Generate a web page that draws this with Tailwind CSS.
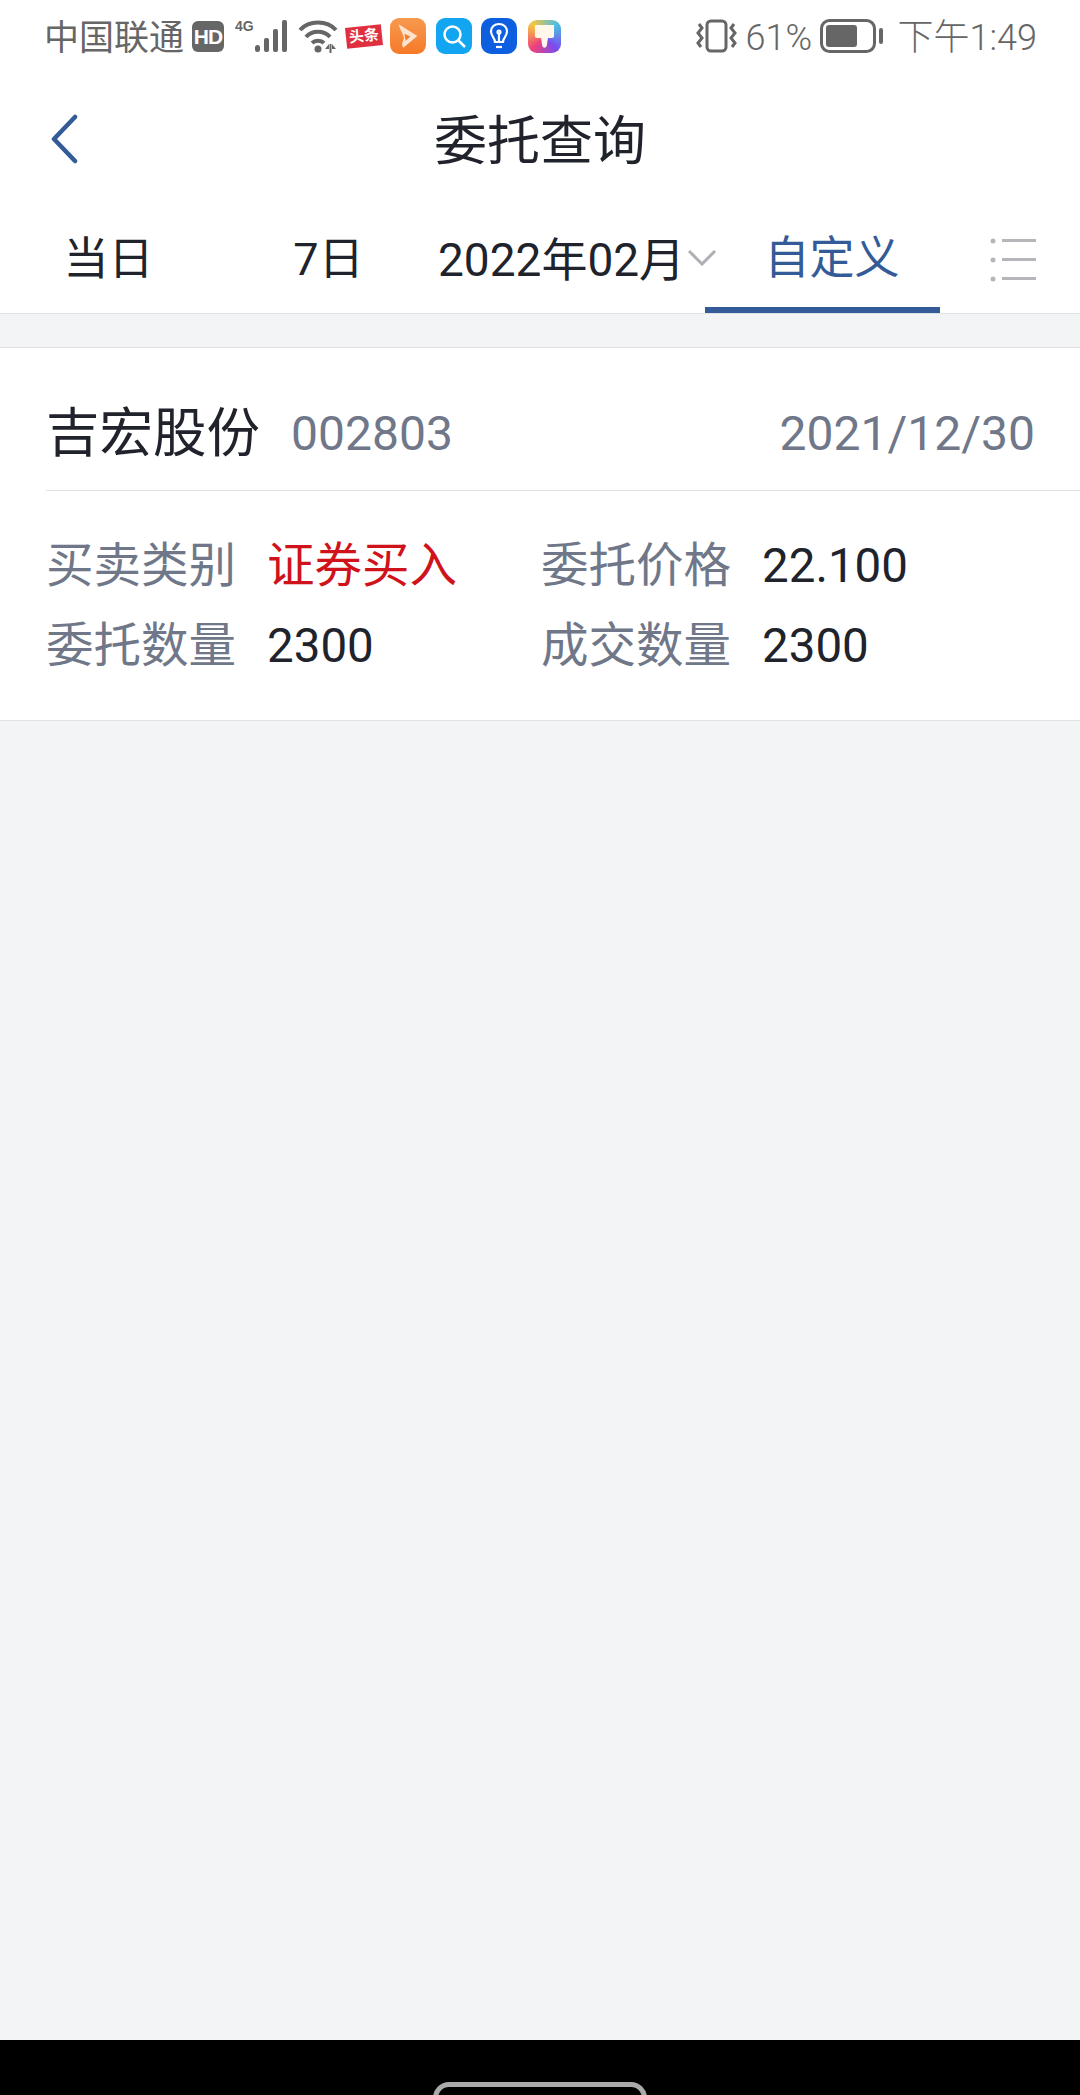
<!DOCTYPE html>
<html lang="zh-CN">
<head>
  <meta charset="UTF-8" />
  <meta name="viewport" content="width=device-width, initial-scale=1.0" />
  <title>委托查询</title>
  <script src="https://cdn.jsdelivr.net/npm/@tailwindcss/browser@4"></script>
</head>
<body class="bg-[#f3f4f6] font-['Roboto','Noto_Sans_CJK_SC',sans-serif]">
  <div class="w-[1080px] h-[2095px] flex flex-col overflow-hidden">

    <!-- status bar -->
    <div class="h-[72px] shrink-0 bg-white flex items-center pl-[44px] pr-[43px] text-[#666] text-[36px] leading-none">
      <span class="text-[35px] w-[148px] mt-[4px] whitespace-nowrap">中国联通</span>
      <div class="w-[32px] h-[31px] rounded-[6px] bg-[#666] text-white text-[21px] font-bold flex items-center justify-center font-['Liberation_Sans',sans-serif] tracking-[-1px]">HD</div>
      <div class="relative w-[53px] h-[34px] ml-[11px]">
        <span class="absolute left-0 top-0 text-[14px] font-bold leading-[14px] font-['Liberation_Sans',sans-serif]">4G</span>
        <svg class="absolute left-0 top-0" width="53" height="34" viewBox="0 0 53 34" fill="#666">
          <rect x="20" y="26" width="5" height="7" rx="2.500"/>
          <rect x="29" y="19" width="5" height="14" rx="2"/>
          <rect x="38" y="10" width="5" height="23" rx="2"/>
          <rect x="47" y="1" width="5" height="32" rx="2"/>
        </svg>
      </div>
      <svg class="ml-[10px]" width="41" height="34" viewBox="0 0 41 34" fill="none" stroke="#666" stroke-width="4">
        <path d="M2 11 C11 1 29 1 38 11"/>
        <path d="M8 18 C14 11 26 11 32 18"/>
        <path d="M14 24 C17 21 23 21 26 24"/>
        <circle cx="20" cy="30" r="3.500" fill="#666" stroke="none"/>
        <path d="M31 25 L27 30 H31 Z M34 25 L38 30 H34 Z" fill="#666" stroke="none"/>
        <path d="M32.500 25 V34" stroke-width="2"/>
      </svg>
      <div class="ml-[7px] w-[36px] h-[21px] -rotate-6 bg-[#e03040] text-white text-[15px] font-bold flex items-center justify-center whitespace-nowrap">头条</div>
      <div class="ml-[8px] w-[36px] h-[36px] rounded-[9px] bg-gradient-to-b from-[#f7994f] to-[#f57a25] flex items-center justify-center">
        <svg width="24" height="28" viewBox="0 0 20 24" fill="none"><path d="M2 2 L18 12 L6 22 C3 18 8 15 6 12 C5 9 3 6 2 2 Z" fill="#fde3d0"/><path d="M7 10 L12 12.500 L8 16 Z" fill="#f57a25"/></svg>
      </div>
      <div class="ml-[10px] w-[36px] h-[36px] rounded-[9px] bg-[#12a6f2] flex items-center justify-center">
        <svg width="26" height="26" viewBox="0 0 26 26" fill="none" stroke="#fff" stroke-width="2.500"><circle cx="11.500" cy="11.500" r="8"/><path d="M17.500 17.500 L24 24"/></svg>
      </div>
      <div class="ml-[9px] w-[36px] h-[36px] rounded-[10px] bg-[#0d5fe0] flex items-center justify-center">
        <svg width="20" height="28" viewBox="0 0 20 28" fill="none" stroke="#fff" stroke-width="2.200"><path d="M6 20 C6 16 2 14 2 9.500 C2 5 5.500 2 10 2 C14.500 2 18 5 18 9.500 C18 14 14 16 14 20 Z"/><path d="M7 25 H13"/><path d="M10 20 V12"/><circle cx="10" cy="10" r="1.500"/></svg>
      </div>
      <div class="ml-[11px] w-[33px] h-[33px] rounded-[9px] bg-[conic-gradient(from_45deg,#4cc0e0,#7a4cf0,#f0407a,#f4c542,#4cc0e0)] flex items-center justify-center">
        <svg width="21" height="25" viewBox="0 0 21 25" fill="#fff8ea"><path d="M1 1 H20 V12 C20 14 18 14 14 14 L13 20 C13 25 8 25 8 20 L7 14 C3 14 1 14 1 12 Z"/></svg>
      </div>

      <svg class="ml-auto" width="41" height="34" viewBox="0 0 41 34" fill="none" stroke="#666" stroke-width="3">
        <rect x="11" y="2" width="19" height="30" rx="4"/>
        <path d="M3 5 L6 9 L2 14 L6 19 L2 24 L5 28"/>
        <path d="M38 5 L35 9 L39 14 L35 19 L39 24 L36 28"/>
      </svg>
      <span class="ml-[9px] w-[66px] mt-[4px] font-light">61%</span>
      <svg class="ml-[8px]" width="63" height="34" viewBox="0 0 63 34" fill="none">
        <rect x="1.500" y="1.500" width="53" height="31" rx="8" stroke="#666" stroke-width="3"/>
        <rect x="6" y="6" width="31" height="22" rx="3" fill="#666"/>
        <rect x="59" y="9" width="4" height="16" rx="2" fill="#666"/>
      </svg>
      <span class="ml-[15px] mt-[4px] whitespace-nowrap font-light">下午1:49</span>
    </div>

    <!-- title bar -->
    <div class="h-[138px] shrink-0 bg-white flex items-center justify-between pl-[50px] pr-[50px] pt-[2px]">
      <svg class="mb-[6px]" width="28" height="50" viewBox="0 0 28 50" fill="none" stroke="#335b97" stroke-width="4.500" stroke-linecap="round" stroke-linejoin="round">
        <path d="M25 3 L4 25 L25 47"/>
      </svg>
      <h1 class="text-[53px] leading-none text-[#20232b]">委托查询</h1>
      <div class="w-[28px]"></div>
    </div>

    <!-- tabs -->
    <div class="h-[104px] shrink-0 bg-white border-b border-[#dfe1e5] grid grid-cols-[217px_218px_270px_235px_140px] text-[45px] leading-none text-[#20232b]">
      <div class="flex items-center justify-center pb-[4px]">当日</div>
      <div class="flex items-center justify-center pl-[5px] pb-[4px]">7日</div>
      <div class="flex items-center pl-[3px] pb-[4px] whitespace-nowrap text-[46px]">
        2022年02月
        <svg class="ml-[2px] mt-[-4px] shrink-0" width="30" height="17" viewBox="0 0 30 17" fill="none" stroke="#aeb0b5" stroke-width="3"><path d="M2 2 L15 15 L28 2"/></svg>
      </div>
      <div class="flex items-center justify-center pl-[19px] border-b-[6px] border-[#335b97] text-[#335b97]">自定义</div>
      <div class="flex items-center pl-[50px] pb-[4px]">
        <svg width="46" height="44" viewBox="0 0 46 44" fill="#b5b6ba">
          <circle cx="3" cy="3" r="2.500"/><rect x="12" y="1" width="34" height="3"/>
          <circle cx="3" cy="22" r="2.500"/><rect x="12" y="20" width="34" height="3"/>
          <circle cx="3" cy="41" r="2.500"/><rect x="12" y="39" width="34" height="3"/>
        </svg>
      </div>
    </div>

    <!-- order card -->
    <div class="mt-[33px] h-[374px] shrink-0 bg-white border-y border-[#dfe1e5] pl-[46px]">
      <div class="h-[143px] border-b border-[#dfe1e5] flex items-center pt-[29px] pr-[45px]">
        <span class="text-[53.5px] leading-none text-[#20232b]">吉宏股份</span>
        <span class="ml-[31px] text-[48px] leading-none text-[#6f7789]">002803</span>
        <span class="ml-auto text-[48px] leading-none text-[#6f7789]">2021/12/30</span>
      </div>
      <div class="pt-[51px] grid grid-cols-[495px_1fr] gap-y-[32px] text-[47.5px] leading-[48px]">
        <div class="flex"><span class="w-[221px] text-[#6f7789]">买卖类别</span><span class="text-[#d0121b]">证券买入</span></div>
        <div class="flex"><span class="w-[221px] text-[#6f7789]">委托价格</span><span class="text-[#20232b]">22.100</span></div>
        <div class="flex"><span class="w-[221px] text-[#6f7789]">委托数量</span><span class="text-[#20232b]">2300</span></div>
        <div class="flex"><span class="w-[221px] text-[#6f7789]">成交数量</span><span class="text-[#20232b]">2300</span></div>
      </div>
    </div>

    <div class="flex-1"></div>

    <!-- navigation bar -->
    <div class="h-[55px] shrink-0 bg-black flex justify-center pt-[42px] overflow-hidden">
      <div class="w-[214px] h-[40px] rounded-[16px] border-[5px] border-[#aaaaaa]"></div>
    </div>
  </div>
</body>
</html>
